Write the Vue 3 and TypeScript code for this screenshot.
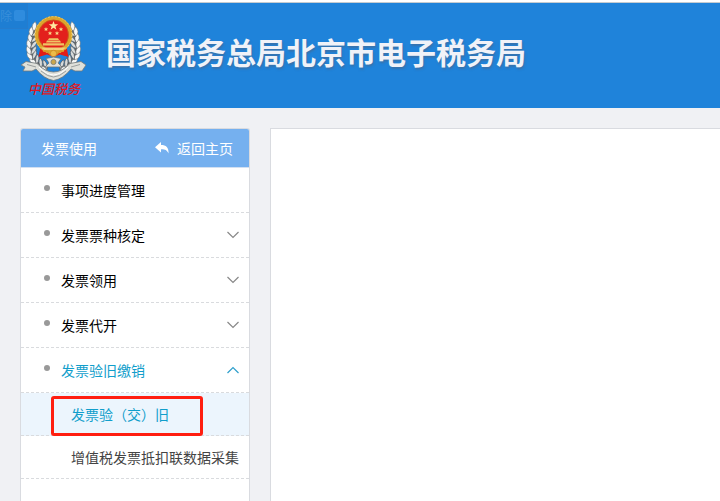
<script setup lang="ts">
import { ref } from 'vue'

interface SubItem {
  label: string
  current?: boolean
}
interface MenuItem {
  label: string
  expandable: boolean
  children?: SubItem[]
}

const items: MenuItem[] = [
  { label: '事项进度管理', expandable: false },
  { label: '发票票种核定', expandable: true },
  { label: '发票领用', expandable: true },
  { label: '发票代开', expandable: true },
  {
    label: '发票验旧缴销',
    expandable: true,
    children: [{ label: '发票验（交）旧', current: true }, { label: '增值税发票抵扣联数据采集' }],
  },
]

const openIndex = ref(4)
const toggle = (i: number) => {
  openIndex.value = openIndex.value === i ? -1 : i
}

// Ears of wheat, from the base of the emblem up around the disc
const leaves = [
  { x: 44, y: 66, a: -52 },
  { x: 39, y: 64, a: -38 },
  { x: 35, y: 60, a: -24 },
  { x: 32, y: 55, a: -12 },
  { x: 31, y: 50, a: 0 },
  { x: 31, y: 44, a: 8 },
  { x: 32, y: 38, a: 16 },
  { x: 33, y: 32, a: 24 },
  { x: 36, y: 27, a: 30 },
]
</script>

<template>
  <div class="page">
    <header class="banner">
      <div class="ghost"><span>除</span><i></i></div>
      <svg class="emblem" viewBox="20 12 68 88" role="img" aria-label="中国税务">
        <g v-for="side in [1, -1]" :key="side" :transform="side === 1 ? '' : 'translate(107 0) scale(-1 1)'">
          <path d="M47 69Q31 63 30 47Q30 35 38 25" fill="none" stroke="#5d6468" stroke-width="5" />
          <g v-for="(l, i) in leaves" :key="i" :transform="`translate(${l.x} ${l.y}) rotate(${l.a}) scale(1.3)`">
            <path d="M0 3Q-5 1-3-4Q1-2 0 3Z" fill="#f6f7f6" stroke="#6b7073" stroke-width=".4" />
            <path d="M0 3Q5 0 4-4Q0-2 0 3Z" fill="#d9dbda" stroke="#54595c" stroke-width=".5" />
          </g>
        </g>
        <path d="M41 43L38.500 56L47 53.500L53.500 56L60 53.500L68.500 56L66 43Z" fill="#e21c16" />
        <circle cx="53.500" cy="34" r="17" fill="#e3201c" stroke="#dba52c" stroke-width="3.600" />
        <circle cx="53.500" cy="34" r="18.400" fill="none" stroke="#f2cf63" stroke-width="1" stroke-dasharray="2 1.500" />
        <circle cx="53.500" cy="34" r="15" fill="none" stroke="#c07a1c" stroke-width=".6" />
        <path d="M53.500 20L54.700 23.300H58.200L55.400 25.400L56.400 28.700L53.500 26.700L50.600 28.700L51.600 25.400L48.800 23.300H52.300Z" fill="#ffe9a0" />
        <g fill="#f8d889">
          <path d="M46 26l.6 1.400 1.600.1-1.200 1 .4 1.500-1.400-.8-1.400.8.4-1.500-1.200-1 1.600-.1z" />
          <path d="M61 26l.6 1.400 1.600.1-1.200 1 .4 1.500-1.400-.8-1.400.8.4-1.500-1.200-1 1.600-.1z" />
          <path d="M50 30l.6 1.400 1.600.1-1.200 1 .4 1.500-1.400-.8-1.400.8.4-1.500-1.200-1 1.600-.1z" />
          <path d="M57 30l.6 1.400 1.600.1-1.200 1 .4 1.500-1.400-.8-1.400.8.4-1.500-1.200-1 1.600-.1z" />
        </g>
        <path d="M48 39L49 37.200H58L59 39ZM46 41.500L47 39.600H60L61 41.500ZM43 42.200H64V44.500H43Z" fill="#efc464" />
        <path d="M41 46.500H66L63 49H44Z" fill="#f3cf79" />
        <path d="M43 50Q48 50 50 53H57Q59 50 64 50" fill="none" stroke="#d99525" stroke-width="1.600" />
        <circle cx="53.500" cy="52.500" r="3.200" fill="#edbb48" stroke="#c98a24" stroke-width=".8" />
        <path d="M46 57.500L53.500 56L61 57.500L58 62L62 66H45L49 62Z" fill="#dfe1dd" stroke="#6f7475" stroke-width=".8" />
        <circle cx="53.500" cy="61" r="2.600" fill="#c9a64c" stroke="#777b7b" stroke-width=".8" />
        <path
          d="M21 64L26 60.500L37 62.500Q45 71 53.500 71Q62 71 70 62.500L81 60.500L86 64L82 70H75L71 68Q63 78 53.500 79.500Q44 78 36 68L32 70H23L25 66Z"
          fill="#dfe0da" stroke="#72787a" stroke-width=".8"
        />
        <path d="M27 63.500L36 66M80 63.500L71 66M41 70Q48 76 53.500 76Q59 76 66 70" fill="none" stroke="#9b9f9e" stroke-width="1" />
        <path d="M39 66Q46 73.500 53.500 74Q61 73.500 68 66" fill="none" stroke="#fff" stroke-width="1" />
        <text class="script" x="28" y="93">中国税务</text>
      </svg>
      <h1>国家税务总局北京市电子税务局</h1>
    </header>

    <div class="body">
      <aside class="sidebar">
        <div class="side-head">
          <h2>发票使用</h2>
          <a class="back" href="#home">
            <svg viewBox="0 0 14 12" aria-hidden="true">
              <path d="M6 0V3C11 3 14 5.500 13.500 11.500C12 8 10 7.200 6 7.300V10.500L0 5.200Z" fill="currentColor" />
            </svg>
            返回主页
          </a>
        </div>
        <nav aria-label="发票使用">
          <ul>
            <li v-for="(item, i) in items" :key="item.label">
              <a v-if="!item.expandable" class="row" href="#progress">
                <i class="dot"></i><span class="label">{{ item.label }}</span>
              </a>
              <button
                v-else type="button" class="row" :class="{ open: openIndex === i }"
                :aria-expanded="openIndex === i" @click="toggle(i)"
              >
                <i class="dot"></i><span class="label">{{ item.label }}</span>
                <svg class="chevron" viewBox="0 0 12 8" aria-hidden="true">
                  <path d="M.5 1L6 6.500L11.500 1" fill="none" stroke="currentColor" stroke-width="1.200" />
                </svg>
              </button>
              <ul v-if="item.children && openIndex === i">
                <li v-for="sub in item.children" :key="sub.label">
                  <a class="sub" :class="{ current: sub.current }" href="#sub">
                    {{ sub.label }}
                    <span v-if="sub.current" class="marker"></span>
                  </a>
                </li>
              </ul>
            </li>
          </ul>
        </nav>
      </aside>
      <main class="content"></main>
    </div>
  </div>
</template>

<style>
body {
  margin: 0;
  background: #f0f1f4;
}
</style>

<style scoped>
* {
  box-sizing: border-box;
}
.page {
  display: flex;
  flex-direction: column;
  min-height: 100vh;
  padding-top: 2px;
  background: linear-gradient(#fff 2px, #f0f1f4 2px);
  font-family: "Noto Sans CJK SC", sans-serif;
  font-size: 14px;
}
.banner {
  position: relative;
  display: flex;
  align-items: flex-start;
  height: 106px;
  padding: 10px 20px 0;
  border-top: 1px solid #c5cbd0;
  background: #1f83da;
}
.ghost {
  position: absolute;
  top: 0;
  left: 0;
  display: flex;
  align-items: center;
  gap: 2px;
  width: 28px;
  height: 26px;
  border: solid #257ccd;
  border-width: 0 1px 1px 0;
  background: #1e7ed3;
  color: #388fda;
  font-size: 12px;
  line-height: 24px;
}
.ghost i {
  width: 11px;
  height: 11px;
  border-radius: 2px;
  background: #2f8cde;
}
.emblem {
  position: relative;
  flex: none;
  width: 68px;
  height: 88px;
}
.script {
  fill: #e01822;
  font-size: 13px;
  font-style: italic;
  font-weight: 500;
}
h1,
h2 {
  margin: 0;
}
h1 {
  padding: 18px 0 0 18px;
  color: #f0f2f8;
  font-size: 30px;
  font-weight: 700;
  line-height: 40px;
  white-space: nowrap;
  text-shadow: 1px 2px 2px rgba(80, 100, 130, 0.5);
}
.body {
  display: flex;
  flex: 1;
  gap: 20px;
  padding: 20px 0 0 20px;
}
.sidebar {
  flex: none;
  width: 230px;
  border: 1px solid #d9dbe0;
  border-bottom: 0;
  border-radius: 3px 3px 0 0;
  background: #fff;
}
.side-head {
  display: flex;
  align-items: center;
  justify-content: space-between;
  height: 39px;
  padding: 0 16px 0 20px;
  border-bottom: 1px solid #d2e0f2;
  border-radius: 2px 2px 0 0;
  background: #75b0ef;
  color: #fff;
}
h2 {
  font-size: 14px;
  font-weight: 400;
}
.back {
  display: flex;
  align-items: center;
  gap: 8px;
  color: #fff;
  text-decoration: none;
}
.back svg {
  width: 14px;
  height: 12px;
}
ul {
  margin: 0;
  padding: 0;
  list-style: none;
}
.row {
  display: flex;
  align-items: center;
  width: 100%;
  height: 45px;
  padding: 0 10px 0 23px;
  border: 0;
  border-bottom: 1px dashed #d9dbde;
  background: none;
  color: #000;
  font: inherit;
  text-align: left;
  text-decoration: none;
  cursor: pointer;
}
.dot {
  width: 6px;
  height: 6px;
  margin: 0 11px 4px 0;
  border-radius: 50%;
  background: #999;
}
.label {
  flex: 1;
}
.chevron {
  width: 12px;
  height: 8px;
  color: #888;
}
.open {
  color: #119ecb;
}
.open .chevron {
  color: #2f9fcc;
  transform: rotate(180deg);
}
.sub {
  position: relative;
  display: block;
  height: 43px;
  padding-left: 50px;
  border-bottom: 1px dashed #d9dbde;
  color: #444;
  line-height: 43px;
  text-decoration: none;
  white-space: nowrap;
}
.current {
  background: #ecf5fd;
  color: #119ecb;
}
.marker {
  position: absolute;
  z-index: 1;
  top: 3px;
  left: 30px;
  width: 152px;
  height: 40px;
  border: 3px solid #ff1e10;
  border-radius: 3px;
}
.content {
  flex: 1;
  min-width: 0;
  border: solid #d9dbe0;
  border-width: 1px 0 0 1px;
  background: #fff;
}
</style>
